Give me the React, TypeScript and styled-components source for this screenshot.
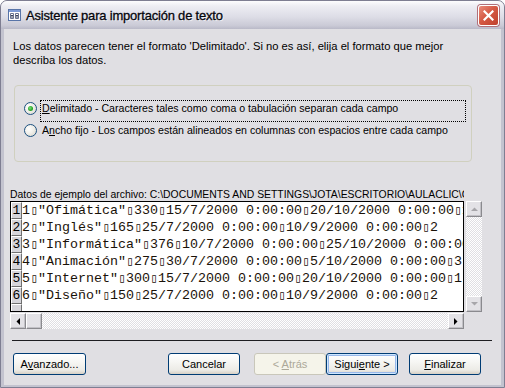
import React from 'react';
import styled, { createGlobalStyle } from 'styled-components';

const GlobalStyle = createGlobalStyle`
  html, body {
    margin: 0;
    padding: 0;
    background: #ffffff;
  }
  body {
    font-family: "Liberation Sans", Arial, sans-serif;
    font-size: 10.8px;
    color: #000000;
  }
`;

const sampleRows = [
  ['1', '"Ofimática"', '330', '15/7/2000 0:00:00', '20/10/2000 0:00:00', '1'],
  ['2', '"Inglés"', '165', '25/7/2000 0:00:00', '10/9/2000 0:00:00', '2'],
  ['3', '"Informática"', '376', '10/7/2000 0:00:00', '25/10/2000 0:00:00', '3'],
  ['4', '"Animación"', '275', '30/7/2000 0:00:00', '5/10/2000 0:00:00', '3'],
  ['5', '"Internet"', '300', '15/7/2000 0:00:00', '20/10/2000 0:00:00', '1'],
  ['6', '"Diseño"', '150', '25/7/2000 0:00:00', '10/9/2000 0:00:00', '2'],
];

const TableIcon = () => (
  <svg width="13" height="12" viewBox="0 0 13 12">
    <rect x="0.5" y="0.5" width="12" height="11" fill="#ffffff" stroke="#5874a8" />
    <rect x="1" y="1" width="11" height="2" fill="#7d9ad6" />
    <path d="M2.5 4.5h3v5h-3zM7.5 4.5h3v5h-3z" fill="none" stroke="#6a7390" />
    <path d="M3 6.5h2M3 8h2M8 6.5h2M8 8h2" stroke="#39425a" />
  </svg>
);

const CloseIcon = () => (
  <svg width="11" height="11" viewBox="0 0 11 11">
    <path d="M1.5 1.5l8 8M9.5 1.5l-8 8" stroke="#ffffff" strokeWidth="2.2" strokeLinecap="square" />
  </svg>
);

const Arrow = ({ dir, color }: { dir: 'up' | 'down' | 'left' | 'right'; color: string }) => {
  const points = {
    up: '0,4 7,4 3.5,0.5',
    down: '0,0 7,0 3.5,3.5',
    left: '4,0 4,7 0.5,3.5',
    right: '0,0 0,7 3.5,3.5',
  }[dir];
  const vertical = dir === 'up' || dir === 'down';
  return (
    <svg width={vertical ? 7 : 4} height={vertical ? 4 : 7} viewBox={vertical ? '0 0 7 4' : '0 0 4 7'}>
      <polygon points={points} fill={color} />
    </svg>
  );
};

const Tab = () => <TabMark>▯</TabMark>;

const renderFields = (fields: string[]) =>
  fields.map((field, i) => (
    <React.Fragment key={i}>
      {i > 0 && <Tab />}
      {field}
    </React.Fragment>
  ));

const App = () => (
  <>
    <GlobalStyle />
    <Window>
      <TitleBar>
        <TableIcon />
        <Title>Asistente para importación de texto</Title>
        <CloseButton>
          <CloseIcon />
        </CloseButton>
      </TitleBar>
      <Client>
        <Intro>
          Los datos parecen tener el formato 'Delimitado'. Si no es así, elija el formato que mejor
          <br />
          describa los datos.
        </Intro>
        <GroupBox>
          <RadioRow>
            <Radio $checked />
            <RadioLabel $focused>
              <u>D</u>elimitado - Caracteres tales como coma o tabulación separan cada campo
            </RadioLabel>
          </RadioRow>
          <RadioRow>
            <Radio />
            <RadioLabel>
              A<u>n</u>cho fijo - Los campos están alineados en columnas con espacios entre cada campo
            </RadioLabel>
          </RadioRow>
        </GroupBox>
        <SampleLabel>
          Datos de ejemplo del archivo: C:\DOCUMENTS AND SETTINGS\JOTA\ESCRITORIO\AULACLIC\CURSO ACCESS\CURSOS.TXT
        </SampleLabel>
        <DataArea>
          <DataBox>
            {sampleRows.map((row) => (
              <DataRow key={row[0]}>
                <RowHead>{row[0]}</RowHead>
                <DataText>{renderFields(row)}</DataText>
              </DataRow>
            ))}
            <DataRow>
              <RowHead />
            </DataRow>
          </DataBox>
          <VScroll>
            <ScrollButton>
              <Arrow dir="up" color="#a7a6aa" />
            </ScrollButton>
            <Track />
            <ScrollButton>
              <Arrow dir="down" color="#a7a6aa" />
            </ScrollButton>
          </VScroll>
          <HScroll>
            <ScrollButton>
              <Arrow dir="left" color="#000000" />
            </ScrollButton>
            <ScrollButton />
            <Track />
            <ScrollButton>
              <Arrow dir="right" color="#000000" />
            </ScrollButton>
          </HScroll>
        </DataArea>
        <Separator />
        <Footer>
          <Button $width={73}>
            A<u>v</u>anzado...
          </Button>
          <ButtonGroup>
            <Button>Cancelar</Button>
            <Pair>
              <Button disabled>
                &lt; <u>A</u>trás
              </Button>
              <Button $default>
                Sigui<u>e</u>nte &gt;
              </Button>
            </Pair>
            <Button>
              <u>F</u>inalizar
            </Button>
          </ButtonGroup>
        </Footer>
      </Client>
    </Window>
  </>
);

const Window = styled.div`
  width: 505px;
  height: 388px;
  box-sizing: border-box;
  display: flex;
  flex-direction: column;
  border: 1px solid #7e7e92;
  border-radius: 7px 7px 0 0;
  background: #c3c3cf;
  overflow: hidden;
`;

const TitleBar = styled.div`
  height: 28px;
  flex: none;
  display: flex;
  align-items: center;
  padding: 0 5px 0 7px;
  background: linear-gradient(#fdfdfe 0%, #ededf3 18%, #dedee7 55%, #cacad6 88%, #b9b9c7 100%);
`;

const Title = styled.div`
  flex: 1;
  margin-left: 5px;
  font-family: "Liberation Sans", Arial, sans-serif;
  font-size: 13px;
  letter-spacing: -0.2px;
  color: #05050c;
  -webkit-text-stroke: 0.3px #05050c;
  text-shadow: 1px 1px 0 rgba(255, 255, 255, 0.6);
`;

const CloseButton = styled.div`
  width: 21px;
  height: 21px;
  box-sizing: border-box;
  display: flex;
  align-items: center;
  justify-content: center;
  border: 1px solid #ffffff;
  border-radius: 3px;
  background: linear-gradient(135deg, #e98d7c 0%, #d55a45 45%, #c0402c 100%);
  box-shadow: 0 0 0 1px #b0707a;
`;

const Client = styled.div`
  flex: 1;
  display: flex;
  flex-direction: column;
  margin: 0 3px 2px;
  background: #e0dfe3;
`;

const Intro = styled.p`
  margin: 10px 9px 0;
  font-size: 11.2px;
  line-height: 14px;
  white-space: nowrap;
`;

const GroupBox = styled.div`
  width: 458px;
  height: 77px;
  box-sizing: border-box;
  margin: 18px 0 0 10px;
  padding: 14px 0 0 9px;
  border: 1px solid #d0d0bf;
  border-radius: 4px;
`;

const RadioRow = styled.div`
  display: flex;
  align-items: flex-start;
`;

const Radio = styled.span<{ $checked?: boolean }>`
  position: relative;
  width: 13px;
  height: 13px;
  flex: none;
  box-sizing: border-box;
  margin-top: 2px;
  border: 1px solid #1c5180;
  border-radius: 50%;
  background: radial-gradient(circle at 35% 35%, #ffffff 0%, #f0efea 45%, #d6d3c8 100%);

  &::after {
    content: '';
    display: ${(props) => (props.$checked ? 'block' : 'none')};
    position: absolute;
    left: 3px;
    top: 3px;
    width: 5px;
    height: 5px;
    border-radius: 50%;
    background: radial-gradient(circle at 40% 40%, #7ee07e 0%, #24a524 60%, #1c8a1c 100%);
  }
`;

const RadioLabel = styled.span<{ $focused?: boolean }>`
  width: 426px;
  height: ${(props) => (props.$focused ? '22px' : '16px')};
  box-sizing: border-box;
  margin-left: 3px;
  padding: 0 1px;
  border: 1px dotted ${(props) => (props.$focused ? '#000000' : 'transparent')};
  font-size: 10.6px;
  line-height: 14px;
  white-space: nowrap;
`;

const SampleLabel = styled.div`
  width: 454px;
  margin: 26px 0 0 6px;
  font-size: 10.4px;
  line-height: 13px;
  white-space: nowrap;
  overflow: hidden;
`;

const DataArea = styled.div`
  display: grid;
  grid-template-columns: 454px 16px;
  grid-template-rows: 111px 16px;
  column-gap: 2px;
  row-gap: 1px;
  margin-left: 6px;
`;

const DataBox = styled.div`
  display: flex;
  flex-direction: column;
  box-sizing: border-box;
  border: 1px solid #000000;
  background: #ffffff;
  overflow: hidden;
`;

const DataRow = styled.div`
  display: flex;
  height: 17px;
  flex: none;
`;

const RowHead = styled.div`
  width: 11px;
  flex: none;
  box-sizing: border-box;
  border-top: 1px solid #ffffff;
  border-left: 1px solid #ffffff;
  border-right: 1px solid #6f6f6f;
  border-bottom: 1px solid #6f6f6f;
  background: #d6d5da;
  font-family: "Liberation Mono", "DejaVu Sans Mono", monospace;
  font-size: 13px;
  line-height: 16px;
  text-align: center;
  overflow: hidden;
`;

const DataText = styled.div`
  font-family: "Liberation Mono", "DejaVu Sans Mono", monospace;
  font-size: 13.33px;
  line-height: 17px;
  white-space: pre;
  color: #1a1208;
`;

const TabMark = styled.span`
  display: inline-block;
  width: 8px;
  text-align: center;
  font-family: "DejaVu Sans Mono", monospace;
  font-size: 12px;
  overflow: hidden;
  vertical-align: top;
`;

const VScroll = styled.div`
  display: flex;
  flex-direction: column;
`;

const HScroll = styled.div`
  display: flex;
`;

const ScrollButton = styled.div`
  width: 16px;
  height: 16px;
  flex: none;
  box-sizing: border-box;
  display: flex;
  align-items: center;
  justify-content: center;
  background: #e3e2e6;
  border: 1px solid;
  border-color: #ffffff #8a8a8e #8a8a8e #ffffff;
  box-shadow: inset -1px -1px 0 #c2c1c6;
`;

const Track = styled.div`
  flex: 1;
  background: repeating-conic-gradient(#ffffff 0% 25%, #e0dfe3 0% 50%) 0 0 / 2px 2px;
`;

const Separator = styled.div`
  width: 480px;
  margin: 11px 0 0 8px;
  border-top: 1px solid #1e1e22;
`;

const Footer = styled.div`
  display: flex;
  justify-content: space-between;
  margin-top: 12px;
  padding: 0 20px 0 9px;
`;

const ButtonGroup = styled.div`
  display: flex;
  gap: 14px;

  & > :last-child {
    margin-left: -3px;
  }
`;

const Pair = styled.div`
  display: flex;
`;

const Button = styled.button<{ $width?: number; $default?: boolean }>`
  width: ${(props) => props.$width || 72}px;
  height: 22px;
  box-sizing: border-box;
  padding: 0;
  border: 1px solid #003c74;
  border-radius: 3px;
  background: linear-gradient(#ffffff 0%, #f6f6f3 40%, #ecebe6 80%, #d6d0c5 100%);
  font-family: "Liberation Sans", Arial, sans-serif;
  font-size: 11px;
  color: #000000;
  box-shadow: ${(props) => (props.$default ? 'inset 0 0 0 1px #cee7ff, inset 0 0 0 2px #98b8ea' : 'none')};

  &:disabled {
    border-color: #c9c7ba;
    background: #f5f4ea;
    color: #aca899;
  }
`;

export default App;
